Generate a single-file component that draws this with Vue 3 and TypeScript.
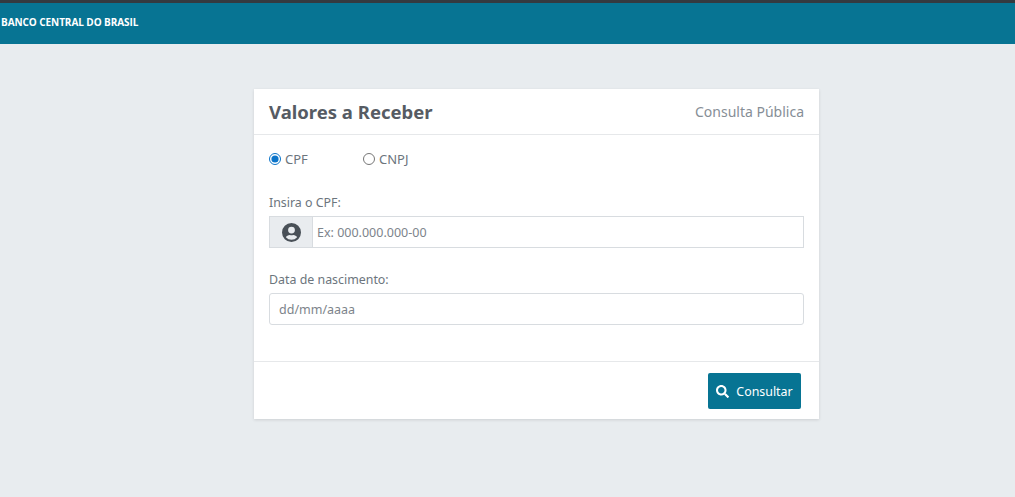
<script setup lang="ts">
import { ref } from "vue";

const docType = ref("cpf");
</script>

<template>
  <div class="page">
    <header class="topbar">
      <span class="brand">BANCO CENTRAL DO BRASIL</span>
    </header>
    <main class="content">
      <section class="card">
        <div class="card-head">
          <h1>Valores a Receber</h1>
          <span class="subtitle">Consulta Pública</span>
        </div>
        <form class="card-body" @submit.prevent>
          <div class="radios">
            <label class="radio">
              <input v-model="docType" type="radio" value="cpf" />
              <span>CPF</span>
            </label>
            <label class="radio">
              <input v-model="docType" type="radio" value="cnpj" />
              <span>CNPJ</span>
            </label>
          </div>
          <label class="field-label" for="cpf">Insira o CPF:</label>
          <div class="input-group">
            <span class="addon">
              <svg width="19" height="19" viewBox="0 0 24 24" aria-hidden="true">
                <path
                  fill="#495057"
                  d="M12 0a12 12 0 1 0 0 24 12 12 0 0 0 0-24zm0 4.6a4.3 4.3 0 1 1 0 8.6 4.3 4.3 0 0 1 0-8.6zm0 16.7a9.3 9.3 0 0 1-7.1-3.3c.9-1.700 2.700-2.900 4.800-2.900.1 0 .2 0 .4.100.6.200 1.200.300 1.900.300s1.300-.1 1.900-.3c.2-.1.300-.1.400-.1 2.100 0 3.900 1.200 4.800 2.900a9.300 9.300 0 0 1-7.100 3.300z"
                />
              </svg>
            </span>
            <input id="cpf" class="input" type="text" placeholder="Ex: 000.000.000-00" />
          </div>
          <label class="field-label second" for="birth">Data de nascimento:</label>
          <input id="birth" class="input boxed" type="text" placeholder="dd/mm/aaaa" />
        </form>
        <div class="card-foot">
          <button class="btn" type="button">
            <svg width="13" height="13" viewBox="0 0 512 512" aria-hidden="true">
              <path
                fill="#fff"
                d="M505 442.700 405.300 343c-4.500-4.500-10.600-7-17-7H372c27.600-35.300 44-79.700 44-128C416 93.100 322.900 0 208 0S0 93.100 0 208s93.100 208 208 208c48.300 0 92.700-16.400 128-44v16.300c0 6.400 2.500 12.500 7 17l99.700 99.700c9.400 9.400 24.600 9.400 33.900 0l28.300-28.300c9.400-9.400 9.400-24.600.1-34zM208 336c-70.700 0-128-57.200-128-128 0-70.700 57.200-128 128-128 70.700 0 128 57.200 128 128 0 70.700-57.200 128-128 128z"
              />
            </svg>
            Consultar
          </button>
        </div>
      </section>
    </main>
  </div>
</template>

<style>
html,
body {
  margin: 0;
  background: #e9ecef;
}
</style>

<style scoped>
.page {
  min-height: 497px;
  background: #e8ecef;
  font-family: "Noto Sans", "Open Sans", sans-serif;
  color: #6c757d;
}

.topbar {
  height: 41px;
  box-sizing: content-box;
  border-top: 3px solid #343a40;
  background: #077493;
  display: flex;
  align-items: flex-start;
}

.brand {
  color: #fff;
  font-family: "Open Sans", sans-serif;
  font-size: 10px;
  font-weight: 700;
  letter-spacing: -0.07px;
  line-height: 14px;
  padding: 12px 0 0 1px;
}

.content {
  display: flex;
  padding: 45px 0 0 254px;
}

.card {
  width: 565px;
  height: 330px;
  background: #fff;
  box-shadow: 0 1px 3px rgba(0, 0, 0, 0.12);
  display: flex;
  flex-direction: column;
  box-sizing: border-box;
}

.card-head {
  height: 46px;
  box-sizing: border-box;
  padding: 0 15px;
  display: flex;
  align-items: center;
  justify-content: space-between;
  border-bottom: 1px solid #e6e8ea;
}

.card-head h1 {
  margin: 0;
  font-size: 18.5px;
  font-weight: 700;
  color: #565b63;
}

.subtitle {
  font-size: 14px;
  color: #868e96;
}

.card-body {
  flex: 1;
  padding: 15px 15px 0;
  display: flex;
  flex-direction: column;
}

.radios {
  display: flex;
  height: 18px;
}

.radio {
  display: flex;
  align-items: center;
  gap: 4px;
  width: 94px;
  font-size: 13px;
  color: #6c757d;
}

.radio input {
  width: 12px;
  height: 12px;
  margin: 0;
  accent-color: #0b74c9;
}

.field-label {
  margin-top: 26px;
  font-size: 12.4px;
  line-height: 18px;
  color: #6c757d;
}

.field-label.second {
  margin-top: 23px;
}

.input-group {
  margin-top: 4px;
  height: 32px;
  display: flex;
  box-sizing: border-box;
  border: 1px solid #d8dce0;
}

.addon {
  width: 42px;
  background: #e9ecef;
  border-right: 1px solid #d8dce0;
  display: flex;
  align-items: center;
  justify-content: center;
}

.input {
  flex: 1;
  min-width: 0;
  border: 0;
  outline: 0;
  padding: 0 4px;
  font: 12.5px "Noto Sans", "Open Sans", sans-serif;
  color: #6c757d;
  background: #fff;
}

.input::placeholder {
  color: #7d848b;
  opacity: 1;
}

.input.boxed {
  flex: none;
  margin-top: 4px;
  height: 32px;
  box-sizing: border-box;
  padding: 0 9px;
  border: 1px solid #d8dce0;
  border-radius: 3px;
}

.card-foot {
  height: 58px;
  box-sizing: border-box;
  border-top: 1px solid #e6e8ea;
  display: flex;
  justify-content: flex-end;
  align-items: flex-start;
  padding: 11px 18px 0 0;
}

.btn {
  width: 93px;
  height: 36px;
  border: 0;
  border-radius: 2px;
  background: #077493;
  color: #fff;
  font: 12.4px "Noto Sans", "Open Sans", sans-serif;
  display: flex;
  align-items: center;
  justify-content: center;
  gap: 7px;
  padding: 0;
}
</style>
